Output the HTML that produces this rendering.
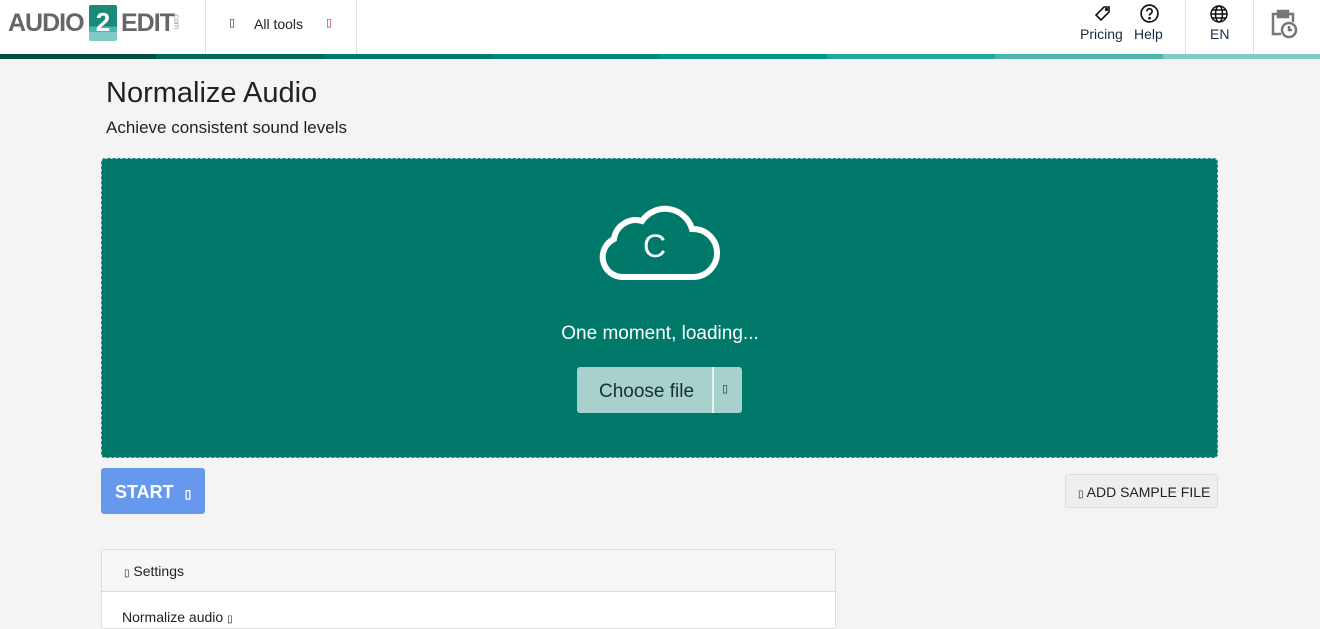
<!DOCTYPE html>
<html><head><meta charset="utf-8"><style>
*{box-sizing:border-box;margin:0;padding:0}
body{width:1320px;height:621px;overflow:hidden;background:#f4f4f4;font-family:"Liberation Sans",sans-serif;color:#222;position:relative}
.hdr{position:absolute;top:0;left:0;width:1320px;height:54px;background:#fff}
.bar{position:absolute;top:54px;left:0;width:1320px;height:5px;display:flex}
.bar div{height:5px}
.abs{position:absolute}
.vl{position:absolute;top:0;width:1px;height:54px;background:#e2e2e2}
</style></head><body>
<div class="hdr">
  <div class="abs" style="left:8px;top:9px;font-weight:bold;font-size:25px;color:#666;letter-spacing:-1px">AUDIO</div>
  <div class="abs" style="left:89px;top:5px;width:28px;height:36px;background:linear-gradient(#1a8a78 0 60%,#4db6ac 60% 75%,#80cbc4 75%);border-radius:2px;color:#fff;font-weight:bold;font-size:26px;text-align:center;line-height:34px">2</div>
  <div class="abs" style="left:121px;top:9px;font-weight:bold;font-size:25px;color:#666;letter-spacing:-1px">EDIT</div>
  <div class="abs" style="left:172px;top:12px;font-size:8px;color:#999;writing-mode:vertical-rl">.com</div>
  <div class="vl" style="left:205px"></div>
  <div class="abs" style="left:229px;top:16px;font-size:11px;color:#333">▯</div>
  <div class="abs" style="left:254px;top:16px;font-size:14px;color:#222">All tools</div>
  <div class="abs" style="left:326px;top:16px;font-size:11px;color:#a33">▯</div>
  <div class="vl" style="left:356px"></div>
  <svg class="abs" style="left:1093px;top:4px" width="20" height="20" viewBox="0 0 20 20" fill="none" stroke="#111" stroke-width="1.6"><path d="M11 3h5v5l-8 8-5-5z"/><circle cx="13.5" cy="5.5" r="0.8"/></svg>
  <div class="abs" style="left:1080px;top:26px;font-size:14px;color:#1a2a44">Pricing</div>
  <svg class="abs" style="left:1139px;top:3px" width="21" height="21" viewBox="0 0 20 20" fill="none" stroke="#111" stroke-width="1.6"><circle cx="10" cy="10" r="8"/><path d="M7.5 8a2.5 2.5 0 1 1 3.5 2.2c-.8.4-1 .9-1 1.8"/><circle cx="10" cy="14.5" r=".5" fill="#111"/></svg>
  <div class="abs" style="left:1134px;top:26px;font-size:14px;color:#1a2a44">Help</div>
  <div class="vl" style="left:1185px"></div>
  <svg class="abs" style="left:1209px;top:4px" width="20" height="20" viewBox="0 0 20 20" fill="none" stroke="#111" stroke-width="1.5"><circle cx="10" cy="10" r="8"/><ellipse cx="10" cy="10" rx="3.5" ry="8"/><path d="M2 10h16M3.5 6h13M3.5 14h13"/></svg>
  <div class="abs" style="left:1210px;top:26px;font-size:14px;color:#1a2a44">EN</div>
  <div class="vl" style="left:1253px"></div>
  <svg class="abs" style="left:1269px;top:8px" width="30" height="32" viewBox="0 0 30 32" fill="none" stroke="#777" stroke-width="2.5"><path d="M12 26H4V6h5M19 6h5v8"/><rect x="9" y="3" width="10" height="6" fill="#777"/><circle cx="20" cy="22" r="7"/><path d="M20 18v4h3"/></svg>
</div>
<div class="bar"><div style="width:156px;background:#004d40"></div><div style="width:168px;background:#00695c"></div><div style="width:168px;background:#00796b"></div><div style="width:167px;background:#00897b"></div><div style="width:168px;background:#009688"></div><div style="width:168px;background:#26a69a"></div><div style="width:168px;background:#4db6ac"></div><div style="width:157px;background:#80cbc4"></div></div>

<div class="abs" style="left:106px;top:77px;font-size:29px;color:#222">Normalize Audio</div>
<div class="abs" style="left:106px;top:118px;font-size:17px;color:#222">Achieve consistent sound levels</div>

<div class="abs" style="left:101px;top:158px;width:1117px;height:300px;background:#00796b;border:1px dashed #9cc;border-radius:4px"></div>
<svg class="abs" style="left:598px;top:201px" width="124" height="82" viewBox="0 0 124 82" fill="none" stroke="#fff" stroke-width="6"><path d="M30 76H24A20 20 0 0 1 16 38 22 22 0 0 1 44 20 28 28 0 0 1 94 28 24 24 0 0 1 96 76z"/></svg>
<div class="abs" style="left:643px;top:228px;font-size:32px;color:#fff">C</div>
<div class="abs" style="left:0;width:1320px;top:323px;text-align:center;font-size:19px;color:#fff">One moment, loading...</div>
<div class="abs" style="left:577px;top:367px;width:165px;height:46px;background:#a6d1cc;border-radius:3px"></div>
<div class="abs" style="left:712px;top:367px;width:2px;height:46px;background:#e8f4f2"></div>
<div class="abs" style="left:599px;top:381px;font-size:19px;color:#183030">Choose file</div>
<div class="abs" style="left:722px;top:382px;font-size:11px;color:#183030">▯</div>

<div class="abs" style="left:101px;top:468px;width:104px;height:46px;background:#6699ee;border-radius:3px;color:#fff;font-weight:bold;font-size:18px;padding:14px 0 0 14px">START <span style="font-size:12px;margin-left:6px">▯</span></div>
<div class="abs" style="left:1065px;top:474px;width:153px;height:34px;background:#eee;border:1px solid #ddd;border-radius:3px;font-size:14px;color:#222;padding:9px 0 0 12px"><span style="font-size:10px">▯</span> ADD SAMPLE FILE</div>

<div class="abs" style="left:101px;top:549px;width:735px;height:80px;background:#fff;border:1px solid #ddd;border-radius:3px"></div>
<div class="abs" style="left:102px;top:550px;width:733px;height:42px;background:#f7f7f7;border-bottom:1px solid #ddd"></div>
<div class="abs" style="left:124px;top:563px;font-size:14px;color:#222"><span style="font-size:10px">▯</span> Settings</div>
<div class="abs" style="left:122px;top:609px;font-size:14px;color:#222">Normalize audio <span style="font-size:10px">▯</span></div>
</body></html>
